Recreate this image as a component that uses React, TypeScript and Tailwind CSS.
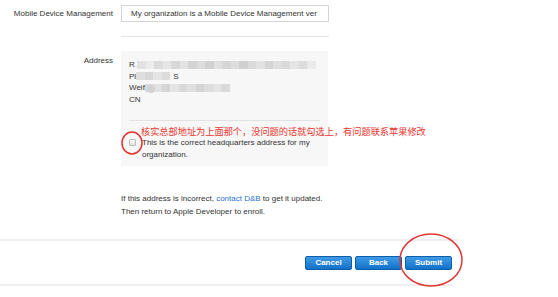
import React from "react";

const font = { fontFamily: '"Liberation Sans", Arial, sans-serif' };

const line1 = ["#e2e2e2", "#ececec", "#dcdcdc", "#e6e6e6", "#d8d8d8", "#e2e2e2", "#d4d4d4", "#dddddd", "#d2d2d2", "#e0e0e0", "#d6d6d6", "#dedede", "#d0d0d0", "#dadada", "#e2e2e2", "#d5d5d5", "#dfdfdf", "#d9d9d9", "#e5e5e5", "#dcdcdc", "#eaeaea"];
const line2 = ["#dedede", "#d8d8d8", "#e4e4e4", "#dcdcdc"];
const line3 = ["#dadada", "#e2e2e2", "#d6d6d6", "#e4e4e4", "#d9d9d9", "#e0e0e0", "#d4d4d4", "#dddddd", "#e4e4e4", "#dadada"];

function Mosaic({ cells }: { cells: string[] }) {
  return (
    <span className="inline-flex align-middle">
      {cells.map((c, i) => (
        <span key={i} className="inline-block h-[8px] w-[8.5px]" style={{ background: c }} />
      ))}
    </span>
  );
}

function Button({ label }: { label: string }) {
  return (
    <button className="h-[14px] w-[47px] rounded-[2px] border border-[#0b5fa9] bg-gradient-to-b from-[#3f9be6] to-[#0f71c9] text-[8px] font-bold leading-[12px] text-white">
      {label}
    </button>
  );
}

export default function App() {
  return (
    <div className="relative h-[297px] w-[558px] overflow-hidden bg-white text-[8px] text-[#333]" style={font}>
      <div className="flex pt-[5px]">
        <div className="w-[113px] pt-[4px] text-right leading-[10px]">Mobile Device Management</div>
        <div className="ml-[8px] h-[17px] w-[208px] border border-[#d4d4d4] pl-[9px] leading-[15px] whitespace-nowrap overflow-hidden">
          My organization is a Mobile Device Management ver
        </div>
      </div>
      <div className="ml-[121px] mt-[14px] w-[208px] border-t border-[#e4e4e4]" />

      <div className="mt-[14px] flex">
        <div className="w-[113px] pt-[5px] text-right leading-[10px]">Address</div>
        <div className="ml-[8px] w-[207px] bg-[#f7f7f7] pt-[8px] pb-[6px]">
          <div className="pl-[8px] leading-[11.5px]">
            <div className="whitespace-nowrap">R<span className="text-[#aaa]">.</span><Mosaic cells={line1} /></div>
            <div className="whitespace-nowrap">Pl<Mosaic cells={line2} /><span className="ml-[3px]">S</span></div>
            <div className="relative whitespace-nowrap">
              Weif<Mosaic cells={line3} />
              <span className="absolute left-[18px] top-[3px] h-[8px] w-[8px] rounded-full bg-[#d2d2d2]" />
            </div>
            <div>CN</div>
          </div>
          <div className="mx-[8px] mt-[15px] border-t border-[#e2e2e2]" />
          <div
            className="ml-[20px] mt-[4px] whitespace-nowrap text-[9.2px] leading-[12px] text-[#e8352e]"
            style={{ fontFamily: '"Noto Sans CJK SC", "Liberation Sans", sans-serif' }}
          >
            核实总部地址为上面那个，没问题的话就勾选上，有问题联系苹果修改
          </div>
          <div className="flex pl-[8px] leading-[11.5px]">
            <span className="mt-[2px] h-[7px] w-[7px] shrink-0 rounded-[1px] border border-[#bdbdbd] bg-gradient-to-b from-[#fafafa] to-[#e2e2e2]" />
            <div className="ml-[6px]">This is the correct headquarters address for my organization.</div>
          </div>
        </div>
      </div>

      <div className="ml-[121px] mt-[27px] leading-[12.5px]">
        <div>
          If this address is incorrect, <span className="text-[#1f74c9]">contact D&amp;B</span> to get it updated.
        </div>
        <div>Then return to Apple Developer to enroll.</div>
      </div>

      <div className="mt-[21px] w-[458px] border-t-2 border-[#ededed]" />
      <div className="mt-[15px] flex w-[452px] justify-end gap-[3px]">
        <Button label="Cancel" />
        <Button label="Back" />
        <Button label="Submit" />
      </div>
      <div className="mt-[14px] w-[452px] border-t-2 border-[#f0f0f0]" />

      <svg className="pointer-events-none absolute left-0 top-0" width="558" height="297">
        <ellipse cx="132" cy="143" rx="10" ry="11" fill="none" stroke="#e3342f" strokeWidth="1.5" />
        <ellipse cx="431" cy="260" rx="31" ry="26" fill="none" stroke="#e3342f" strokeWidth="1.5" />
      </svg>
    </div>
  );
}
